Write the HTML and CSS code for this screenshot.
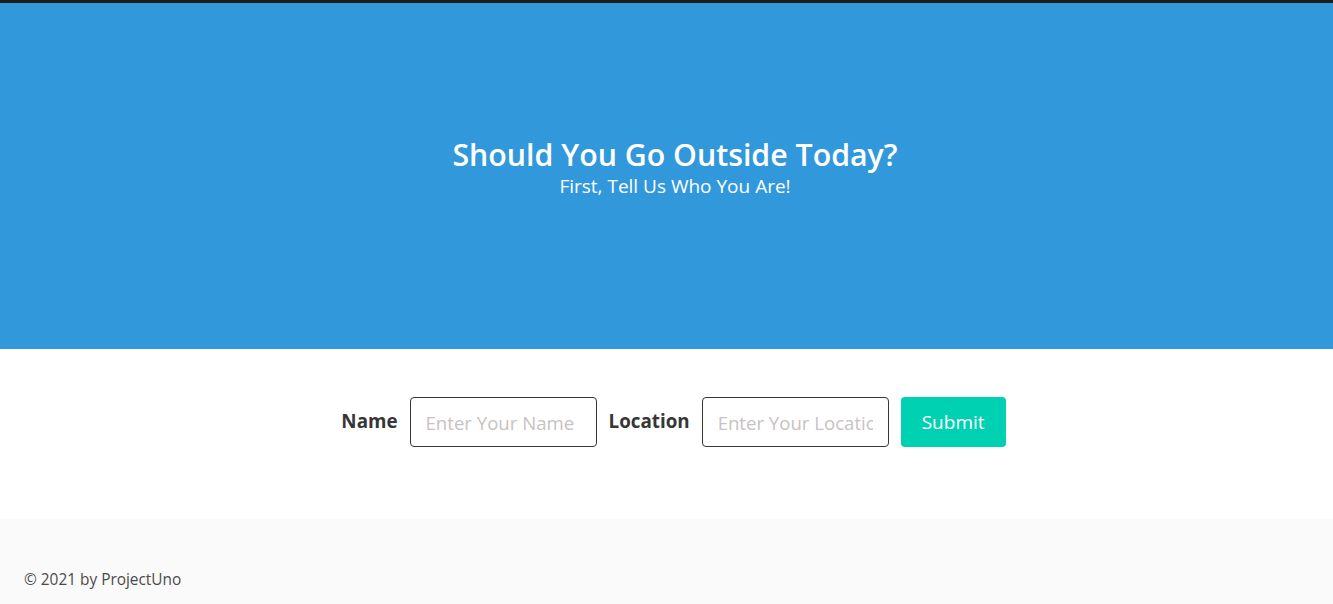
FILE: index.html
```html
<!DOCTYPE html>
<html lang="en">
<head>
<meta charset="utf-8">
<title>Should You Go Outside Today?</title>
<link rel="stylesheet" href="styles.css">
</head>
<body>
<div class="topbar"></div>
<section class="hero">
  <h1 class="title">Should You Go Outside Today?</h1>
  <h2 class="subtitle">First, Tell Us Who You Are!</h2>
</section>
<section class="form-section">
  <form class="user-form">
    <label class="label" for="name">Name</label>
    <input class="input" id="name" type="text" placeholder="Enter Your Name">
    <label class="label" for="loc">Location</label>
    <input class="input" id="loc" type="text" placeholder="Enter Your Location">
    <button class="button" type="button">Submit</button>
  </form>
</section>
<footer class="footer">
  <p class="copy">© 2021 by ProjectUno</p>
</footer>
</body>
</html>
```
FILE: styles.css
```css
* { box-sizing: border-box; }
html, body { margin: 0; padding: 0; }
body {
  font-family: "Open Sans", "Noto Sans", sans-serif;
  color: #4a4a4a;
  background: #fff;
  font-size: 16px;
  line-height: 1.5;
  height: 604px;
  overflow: hidden;
}
.topbar { height: 3px; background: #1c1c1c; }
.hero {
  background: #3298dc;
  height: 346px;
  padding: 134px 24px 0 41px;
  text-align: center;
  color: #fff;
}
.title {
  margin: 0;
  font-size: 30.3px;
  font-weight: 600;
  line-height: 36px;
  color: #fff;
}
.subtitle {
  margin: 1px 0 0;
  font-size: 19px;
  font-weight: 400;
  line-height: 24px;
  color: #fff;
}
.form-section {
  padding: 48px 24px 72px 38px;
  background: #fff;
}
.user-form {
  display: flex;
  justify-content: center;
  align-items: center;
  gap: 12px;
}
.label {
  font-size: 18.8px;
  font-weight: 700;
  color: #363636;
  margin-top: -2px;
}
.input {
  width: 187px;
  height: 50px;
  border: 1px solid #363636;
  border-radius: 4px;
  padding: 0 15px;
  font-family: inherit;
  font-size: 18.6px;
  color: #363636;
  background: #fff;
}
.input::placeholder { color: #c8c2c2; }
.button {
  width: 105px;
  height: 50px;
  border: none;
  border-radius: 4px;
  background: #00d1b2;
  color: #fff;
  font-family: inherit;
  font-size: 19px;
}
.footer {
  background: #fafafa;
  padding: 49px 24px 0;
  height: 85px;
}
.copy {
  margin: 0;
  font-size: 15.4px;
  line-height: 24px;
  color: #4a4a4a;
}
```
